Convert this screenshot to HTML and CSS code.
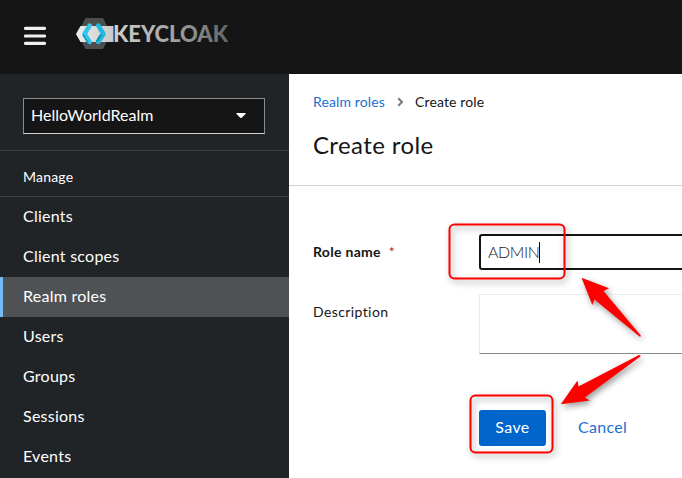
FILE: index.html
```html
<!DOCTYPE html>
<html lang="en">
<head>
<meta charset="utf-8">
<title>Create role</title>
<link rel="stylesheet" href="styles.css">
</head>
<body>
<header class="masthead">
  <svg class="menu" width="22" height="20" viewBox="0 0 22 20"><path d="M1.500 2.400h19M1.500 10h19M1.500 17.400h19" stroke="#f0f0f0" stroke-width="3.200" stroke-linecap="round"/></svg>
  <svg class="logo" width="154" height="34" viewBox="0 0 154 34">
    <defs>
      <linearGradient id="word" gradientUnits="userSpaceOnUse" x1="38" y1="0" x2="153" y2="0"><stop offset="0" stop-color="#d0d0d0"/><stop offset=".5" stop-color="#a5a5a5"/><stop offset="1" stop-color="#646464"/></linearGradient>
      <linearGradient id="bar" x1="0" x2="1"><stop offset="0" stop-color="#eee"/><stop offset="1" stop-color="#c8c8c8"/></linearGradient>
    </defs>
    <path d="M9.500 1h17.500l8 15.500-8 15.500H9.500L1.500 16.500z" fill="#4d4d4d"/>
    <path d="M4.500 9h33v16h-33L0 17z" fill="url(#bar)"/>
    <path d="M13.700 8.500 8.500 17l5.200 8" fill="none" stroke="#35c5e8" stroke-width="4.500" stroke-linejoin="round" stroke-linecap="round"/>
    <path d="M7 17.500l5 8.500" stroke="#079fc4" stroke-width="1.500"/>
    <path d="M22.300 8.500 27.500 17 22.300 25" fill="none" stroke="#20b9df" stroke-width="4.500" stroke-linejoin="round" stroke-linecap="round"/>
    <path d="M25 17.500 20.500 24.500" stroke="#078bac" stroke-width="1.800"/>
    <text x="37" y="25" textLength="115" lengthAdjust="spacingAndGlyphs" class="wordmark" fill="url(#word)">KEYCLOAK</text>
  </svg>
</header>
<div class="shell">
  <aside class="sidebar">
    <div class="realm"><div class="select"><span class="t-realm">HelloWorldRealm</span><svg width="10" height="6" viewBox="0 0 10 6"><path d="M.8 0h8.400Q10 .2 9.500 1L5.700 4.800Q5 5.400 4.300 4.800L.5 1Q0 .2.8 0z" fill="#fff"/></svg></div></div>
    <h2 class="section">Manage</h2>
    <nav>
      <a class="item">Clients</a>
      <a class="item">Client scopes</a>
      <a class="item current">Realm roles</a>
      <a class="item">Users</a>
      <a class="item">Groups</a>
      <a class="item">Sessions</a>
      <a class="item">Events</a>
    </nav>
  </aside>
  <main class="main">
    <div class="heading">
      <div class="crumbs"><a class="link">Realm roles</a><svg width="7" height="10" viewBox="0 0 7 10"><path d="M1.300 1.200 5 5 1.300 8.800" fill="none" stroke="#777a7d" stroke-width="2"/></svg><span>Create role</span></div>
      <h1>Create role</h1>
    </div>
    <form class="form">
      <div class="row"><label class="strong">Role name<span class="required">*</span></label><div class="input"><span>ADMIN</span><i class="caret"></i></div></div>
      <div class="row second"><label>Description</label><div class="area"></div></div>
      <div class="actions"><span class="save">Save</span><span class="cancel">Cancel</span></div>
    </form>
  </main>
</div>
<svg class="marks" width="682" height="478" viewBox="0 0 682 478">
  <g class="shadow">
    <rect x="449.500" y="224.500" width="115" height="54" rx="5" fill="none" stroke="red" stroke-width="2"/>
    <rect x="470.500" y="395.500" width="82" height="57" rx="5" fill="none" stroke="red" stroke-width="2"/>
    <path d="M581.500 277.800 609 288.300 603.500 291 640.800 335.500Q641 337 639.500 336.500L594.500 299.500 592.300 305z" fill="red"/>
    <path d="M560.800 404.300 577.500 380.500 578.500 386.500 639 355Q641.500 355 640 356.800L584.800 397.500 589.800 400.600z" fill="red"/>
  </g>
</svg>
</body>
</html>
```
FILE: styles.css
```css
* { box-sizing: border-box; }
body { margin: 0; width: 682px; height: 478px; overflow: hidden; background: #fff; color: #151515; font: 16px/24px Lato, "Open Sans", sans-serif; }
svg { display: block; flex: none; }
.masthead { height: 74px; background: #151515; display: flex; align-items: flex-start; padding-left: 24px; }
.menu { margin-top: 26px; }
.logo { margin: 17px 0 0 30px; }
.wordmark { font: 900 22px Lato, sans-serif; }
.shell { display: flex; height: 404px; }
.sidebar { width: 289px; flex: none; background: #212427; color: #fff; }
.realm { height: 77px; padding: 24px 24px 0 23px; border-bottom: 1px solid #3c3f42; }
.select { height: 36px; border: 1px solid #8a8d90; border-bottom-color: #d2d2d2; background: #151515; display: flex; align-items: center; justify-content: space-between; padding: 0 18px 0 7px; }
.t-realm { letter-spacing: .02px; padding-bottom: 2px; }
.section { margin: 0; height: 46px; padding: 14px 0 0 23px; font-size: 14px; line-height: 24px; font-weight: 400; letter-spacing: .2px; border-bottom: 1px solid #3c3f42; }
.item { display: block; height: 40px; padding: 7px 0 9px 23px; letter-spacing: .25px; }
.current { background: #4f5255; border-left: 3px solid #73bcf7; padding-left: 20px; }
.main { flex: 1; min-width: 0; }
.heading { height: 112px; padding: 17px 0 0 24px; border-bottom: 1px solid #d2d2d2; }
.crumbs { display: flex; align-items: center; height: 21px; font-size: 14px; letter-spacing: .13px; }
.crumbs svg { margin: 0 11px 0 12px; }
.link, .cancel { color: #1a6fd0; }
.cancel { letter-spacing: .3px; padding-bottom: 2px; }
h1 { margin: 16px 0 0; font-size: 24px; line-height: 34px; font-weight: 400; letter-spacing: .4px; }
.form { padding: 48px 0 0 24px; }
.row { display: flex; align-items: flex-start; }
.second { margin-top: 24px; }
label { width: 166px; flex: none; padding-top: 7px; font-size: 14px; line-height: 21px; letter-spacing: .4px; }
.strong { font-weight: 700; letter-spacing: .3px; }
.required { color: #c9190b; font-weight: 400; margin-left: 8px; }
.input { flex: 1; height: 36px; border: 2px solid #151515; border-right: 0; border-radius: 3px 0 0 3px; padding-left: 7px; display: flex; align-items: center; font-weight: 300; letter-spacing: -.4px; }
.caret { width: 1px; height: 21px; background: #000; }
.area { flex: 1; height: 60px; border: 1px solid #ededed; border-right: 0; border-bottom-color: #8a8d90; }
.actions { display: flex; align-items: center; height: 36px; margin: 56px 0 0 166px; }
.save { width: 67px; height: 36px; line-height: 34px; border-radius: 3px; background: #06c; color: #fff; text-align: center; letter-spacing: .4px; margin-right: 32px; }
.marks { position: absolute; left: 0; top: 0; }
.shadow { filter: drop-shadow(2px 3px 3px rgba(0, 0, 0, .4)); }
```
